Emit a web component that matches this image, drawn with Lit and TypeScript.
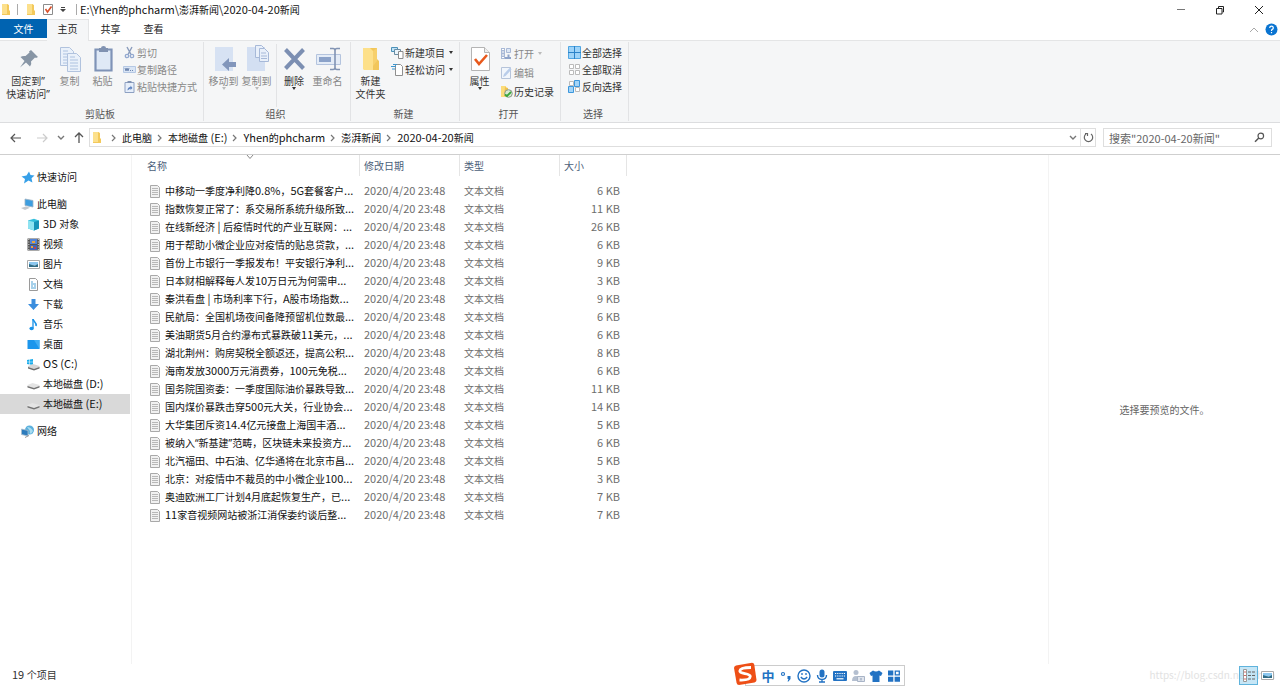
import { LitElement, html, css, TemplateResult } from "lit";
import { customElement, property } from "lit/decorators.js";
import { classMap } from "lit/directives/class-map.js";

const icons: Record<string, TemplateResult> = {
  folder: html`<svg width="10" height="13" viewBox="0 0 10 13"><path d="M1 1h6v11H1z" fill="#fbe29a"/><path d="M6 1l2 1v5l1 1v4H1V11h5z" fill="#f3c95b"/><path d="M1 1h5v10H1z" fill="#fce08c"/></svg>`,
  check: html`<svg width="12" height="13" viewBox="0 0 12 13"><path d="M1.500 1.500h9v10h-9z" fill="#fff" stroke="#8c8c8c"/><path d="M3.500 6l2 3L9.500 3.500" fill="none" stroke="#d9512c" stroke-width="1.600"/></svg>`,
  qat: html`<svg width="6" height="7" viewBox="0 0 6 7"><path d="M1 1h4v1H1zM0 3h6L3 6z" fill="#444"/></svg>`,
  min: html`<svg width="10" height="10" viewBox="0 0 10 10"><path d="M1 4.500h8" stroke="#777" fill="none"/></svg>`,
  restore: html`<svg width="10" height="10" viewBox="0 0 10 10"><path d="M1.500 3.500h5.500v5.500H1.500zM3.500 3V1.500h5v5.500H7.500" stroke="#222" fill="none"/></svg>`,
  close: html`<svg width="10" height="10" viewBox="0 0 10 10"><path d="M1 1l8 8M9 1L1 9" stroke="#222" fill="none"/></svg>`,
  collapse: html`<svg width="10" height="6" viewBox="0 0 10 6"><path d="M1 5l4-4 4 4" stroke="#a8a8a8" fill="none"/></svg>`,
  help: html`<svg width="13" height="13" viewBox="0 0 13 13"><circle cx="6.500" cy="6.500" r="6" fill="#0a74d1"/><path d="M4.700 5Q4.800 3.200 6.500 3.200T8.300 4.900Q8.300 5.800 7.200 6.400 6.500 6.800 6.500 7.900M6.500 9v1.200" fill="none" stroke="#fff" stroke-width="1.200"/></svg>`,
  pin: html`<svg width="32" height="32" viewBox="0 0 32 32"><path d="M19 6l7 7-2 1-1-.5-4 4q1 3-1 5l-4-4-6 5 4.500-6.500-4-4q2-1.500 5-1l4-3.500-.5-1z" fill="#8795a5"/></svg>`,
  copy: html`<svg width="32" height="32" viewBox="0 0 32 32"><g fill="#eaf1fa" stroke="#b1c3de"><path d="M6.500 3.500h9l4 4v14h-13z"/><path d="M13.500 9.500h9l4 4v14h-13z"/></g><path d="M9 7h5M9 10h4M9 13h4M9 16h4M9 19h4M16 13h5M16 16h8M16 19h8M16 22h8M16 25h8" stroke="#adc2e0"/></svg>`,
  paste: html`<svg width="32" height="32" viewBox="0 0 32 32"><path d="M8.500 5.500h16v21h-16z" fill="#dfe9f6" stroke="#7f93b7" stroke-width="2.200"/><path d="M12 4h2q0-2 2.500-2T19 4h2v4h-9z" fill="#8092b1"/></svg>`,
  moveto: html`<svg width="32" height="32" viewBox="0 0 32 32"><path d="M7 3h18v24H7z" fill="#d7e2f3"/><path d="M28 18h-7v-4l-7 6.500 7 6.500v-4h7z" fill="#8296bb"/></svg>`,
  copyto: html`<svg width="32" height="32" viewBox="0 0 32 32"><path d="M6 3h18v24H6z" fill="#d3dff2"/><g fill="#e9f0fa" stroke="#a7b9d8"><path d="M14.500 1.500h6l3 3v9h-9z"/><path d="M18.500 4.500h5l4 4v9h-9z"/></g><path d="M20 9h5M20 12h6M20 14.500h6" stroke="#a7b9d8"/></svg>`,
  del: html`<svg width="32" height="32" viewBox="0 0 32 32"><path d="M7.500 5.500l18 19M25.500 5.500l-18 19" stroke="#7c8fb2" stroke-width="4" fill="none"/></svg>`,
  rename: html`<svg width="32" height="32" viewBox="0 0 32 32"><path d="M4.500 10.500h24v10h-24z" fill="#e4ecf7" stroke="#b4c4de"/><path d="M7 13h12v5H7z" fill="#8ba2c9"/><path d="M18 4.500h3q2 0 2 2v17q0 2-2 2h-3M28 4.500h-3q-2 0-2 2v17q0 2 2 2h3" stroke="#8193b3" stroke-width="1.600" fill="none"/></svg>`,
  newfolder: html`<svg width="32" height="32" viewBox="0 0 32 32"><path d="M8 4h14v11l2 2v9H9z" fill="#f2c65a"/><path d="M8 4h7l3 3v19H9L8 25z" fill="#fde08a"/><path d="M18 7l4-3v13l-4 5z" fill="#f7d06c"/></svg>`,
  props: html`<svg width="32" height="32" viewBox="0 0 32 32"><path d="M7.500 3.500h13l5 5v18h-18z" fill="#fff" stroke="#b4b4b4"/><path d="M20.500 3.500v5h5" fill="#eee" stroke="#b4b4b4"/><path d="M11 15l4 5 8-9" stroke="#e8591c" stroke-width="2.600" fill="none"/></svg>`,
  cut: html`<svg width="13" height="13" viewBox="0 0 13 13"><path d="M4 1l4 7.500M9 1L5 8.500" stroke="#8a9cbc" stroke-width="1.400" fill="none"/><circle cx="4" cy="10" r="1.700" fill="none" stroke="#93a9d0" stroke-width="1.300"/><circle cx="9" cy="10" r="1.700" fill="none" stroke="#93a9d0" stroke-width="1.300"/></svg>`,
  path: html`<svg width="13" height="13" viewBox="0 0 13 13"><path d="M.5 3.500h12v6H.5z" fill="#d9e5f5" stroke="#b5c8e4"/><path d="M2 5l1 3 1-3 1 3 1-3M7 7.500h1M9 7.500h1" stroke="#6f87b0" fill="none"/></svg>`,
  shortcut: html`<svg width="13" height="13" viewBox="0 0 13 13"><path d="M2 2.500h9v10H2z" fill="#e6eefa" stroke="#8da0c2"/><path d="M4.500 1h4v2h-4z" fill="#8193b3"/><path d="M4.500 10.500q0-3.500 3-3.500V5.500L9.500 8 7.500 10V8.500" fill="#5f83c0"/></svg>`,
  newitem: html`<svg width="13" height="13" viewBox="0 0 13 13"><path d="M.5 1.500h6v4h-6z" fill="#bfe2f7" stroke="#4b91b8"/><path d="M3.500 3.500h6v5h-6z" fill="#eaf4fb" stroke="#6a8da3"/><path d="M7.500 5.500h4.500v7H7.500z" fill="#fff" stroke="#8b8b8b"/></svg>`,
  easy: html`<svg width="13" height="13" viewBox="0 0 13 13"><path d="M4.500 1.500h5l2 2v9h-7z" fill="#fff" stroke="#8f8f8f"/><path d="M0 3.500h5M2 1.500h4M1 6h3" stroke="#3d96cf"/></svg>`,
  open: html`<svg width="13" height="13" viewBox="0 0 13 13"><path d="M1 1h4v11H1z" fill="#a9b9d6"/><path d="M2 2.500h2M2 5h2M2 8h2M2 10.500h2" stroke="#fff"/><path d="M6.500 1.500h4v4h-4z" fill="#dde7f5" stroke="#a9b9d6"/><path d="M5 12h6v-2H9.500V7.500h-2V10H5z" fill="#8fa4ca"/></svg>`,
  edit: html`<svg width="13" height="13" viewBox="0 0 13 13"><path d="M1.500 1.500h9v11h-9z" fill="#f1f6fc" stroke="#b6c4da"/><path d="M3 11l1-3 6-6.500 1.500 2L5.500 10z" fill="#b9cdea"/></svg>`,
  history: html`<svg width="13" height="13" viewBox="0 0 13 13"><path d="M1 1h5v11H1z" fill="#fbdc7b"/><path d="M5 2l3 1v8H4z" fill="#f0c34f"/><circle cx="8.500" cy="8.500" r="3.800" fill="#d8ead2" stroke="#8a9a8a"/><path d="M5 9.500l2 1.500 4-4" stroke="#38a63a" stroke-width="1.800" fill="none"/></svg>`,
  selall: html`<svg width="13" height="13" viewBox="0 0 13 13"><path d="M.5.5h12v12H.5z" fill="#9ed3f8" stroke="#4fa5e2"/><path d="M6.500 0v13M0 6.500h13" stroke="#2c83c9"/></svg>`,
  selnone: html`<svg width="13" height="13" viewBox="0 0 13 13"><path d="M1.500 1.500h4v4h-4zM7.500 1.500h4v4h-4zM1.500 7.500h4v4h-4zM7.500 7.500h4v4h-4z" fill="#fff" stroke="#bbb"/></svg>`,
  selinv: html`<svg width="13" height="13" viewBox="0 0 13 13"><path d="M1.500 1.500h4v4h-4zM7.500 7.500h4v4h-4z" fill="#fff" stroke="#bbb"/><path d="M6.500.5h5v6h-5zM.5 6.500h5v6h-5z" fill="#a3d4f8" stroke="#3c97dc"/></svg>`,
  back: html`<svg width="12" height="10" viewBox="0 0 12 10"><path d="M5 1L1 5l4 4M1 5h10" stroke="#555" stroke-width="1.200" fill="none"/></svg>`,
  fwd: html`<svg width="12" height="10" viewBox="0 0 12 10"><path d="M7 1l4 4-4 4M11 5H1" stroke="#ccc" stroke-width="1.200" fill="none"/></svg>`,
  down: html`<svg width="8" height="6" viewBox="0 0 8 6"><path d="M1 1l3 3 3-3" stroke="#777" stroke-width="1.400" fill="none"/></svg>`,
  up: html`<svg width="10" height="12" viewBox="0 0 10 12"><path d="M1 5l4-4 4 4M5 1v10" stroke="#555" stroke-width="1.300" fill="none"/></svg>`,
  sep: html`<svg width="6" height="8" viewBox="0 0 6 8"><path d="M1 1l3 3-3 3" stroke="#777" stroke-width="1.200" fill="none"/></svg>`,
  refresh: html`<svg width="11" height="11" viewBox="0 0 11 11"><path d="M3 2a4.200 4.200 0 1 0 5 0M2 1.500h2.500V4" stroke="#666" stroke-width="1.200" fill="none"/></svg>`,
  search: html`<svg width="11" height="11" viewBox="0 0 11 11"><circle cx="6.800" cy="4" r="2.800" stroke="#555" stroke-width="1.200" fill="none"/><path d="M4.800 6L1 9.800" stroke="#555" stroke-width="1.500"/></svg>`,
  sort: html`<svg width="8" height="5" viewBox="0 0 8 5"><path d="M1 0l3 3.500L7 0" stroke="#888" fill="none"/></svg>`,
  txt: html`<svg width="10" height="13" viewBox="0 0 10 13"><path d="M.5.5h7l2 2v10h-9z" fill="#f1f1f1" stroke="#a9a9a9"/><path d="M2 3.500h6M2 5.500h6M2 7.500h6M2 9.500h6" stroke="#b8b8b8"/></svg>`,
  star: html`<svg width="14" height="13" viewBox="0 0 14 13"><path d="M8 .5l1.500 3.500 4 .5-3 2.700.9 4.300L7.500 9.500 3 12.500l1-4.500L.5 5.500 5.500 4.500z" fill="#37a0e8"/></svg>`,
  pc: html`<svg width="14" height="13" viewBox="0 0 14 13"><path d="M4 1l8 1.500v6.500L4 7.500z" fill="#3d9ee0" stroke="#9db3c4" stroke-width=".8"/><path d="M0 10l5-1.500 4 1.200L4 12z" fill="#c4c9ce"/></svg>`,
  cube: html`<svg width="13" height="13" viewBox="0 0 13 13"><path d="M1 2.500L7 .8l5 1.700v8L7 12.500l-6-2z" fill="#35bfdc"/><path d="M1 2.500l6 1.500v8.500l-6-2z" fill="#8fe3f1"/><path d="M7 4l5-1.500v8l-5 2z" fill="#1793b8"/></svg>`,
  video: html`<svg width="13" height="13" viewBox="0 0 13 13"><path d="M.5.5h12v12H.5z" fill="#555"/><path d="M3 1h7v5H3z" fill="#5384d6"/><path d="M3 7h7v5H3z" fill="#3f63b5"/><path d="M5 3h3v2H5zM4 8h2v2H4z" fill="#e9a53b"/><path d="M7 9h2v2H7z" fill="#c23f4f"/><path d="M1.800 1v12M11.300 1v12" stroke="#ddd" stroke-dasharray="1 1.500"/></svg>`,
  picture: html`<svg width="13" height="13" viewBox="0 0 13 13"><path d="M.5 2.500h12v8H.5z" fill="#fff" stroke="#aaa"/><path d="M2 4h9v3H2z" fill="#8cc7ef"/><path d="M2 9V6l3 1 3 .5L11 6v3z" fill="#2f6b85"/></svg>`,
  doc: html`<svg width="13" height="13" viewBox="0 0 13 13"><path d="M2.500 .5h6l2 2v10h-8z" fill="#fff" stroke="#9a9a9a"/><path d="M4 4h2M4 6h5M4 8h2M7 8h2M4 10h5" stroke="#4fa3d6"/></svg>`,
  download: html`<svg width="13" height="13" viewBox="0 0 13 13"><path d="M4.500 1h4v5H12l-5.500 6L1 6h3.500z" fill="#3b8ede"/></svg>`,
  music: html`<svg width="13" height="13" viewBox="0 0 13 13"><path d="M6 1c0 2.500 4 3 3 7" stroke="#1b93e8" stroke-width="1.600" fill="none"/><path d="M6 1v9" stroke="#1b93e8" stroke-width="1.300"/><ellipse cx="4.600" cy="10.500" rx="2.200" ry="1.800" fill="#1b93e8"/></svg>`,
  desktop: html`<svg width="13" height="13" viewBox="0 0 13 13"><path d="M.5 2h12v9H.5z" fill="#1c96ec"/><path d="M7 2h5.500v9z" fill="#41adf3"/></svg>`,
  osdrive: html`<svg width="13" height="13" viewBox="0 0 13 13"><path d="M0 2l2.500-.5v2.200H0zM3 1.400L6 1v2.700H3zM0 4.200h2.500v2.200L0 6zM3 4.200h3V7l-3-.5z" fill="#1aaceb"/><path d="M1 8l5-2 6.500 2v2L7 12 1 10z" fill="#d5d5d5"/><path d="M1 9l6 2 5.500-2v1.500L7 12.500l-6-2z" fill="#6d6d6d"/></svg>`,
  drive: html`<svg width="13" height="13" viewBox="0 0 13 13"><path d="M.5 7l5-2 7 2v2L7 11 .5 9z" fill="#e4e4e4"/><path d="M.5 8L7 10l5.500-2v1.500L7 11.500.5 9.500z" fill="#737373"/></svg>`,
  network: html`<svg width="14" height="13" viewBox="0 0 14 13"><circle cx="8.500" cy="5" r="4.500" fill="#5bb0dd"/><path d="M6 2q4 0 6 4l-2 3q-2-1-1-3z" fill="#a8dcf1"/><path d="M.5 4l6.500 1.500v5.500L.5 9.500z" fill="#2d7cbd" stroke="#a9bccb" stroke-width=".8"/><path d="M4 12.500l4-2" stroke="#999"/></svg>`,
  details: html`<svg width="13" height="13" viewBox="0 0 13 13"><path d="M1.500 .5h3v12h-3z" fill="#fff" stroke="#999"/><path d="M2 3h2M2 6.500h2M2 10h2" stroke="#d06a6a"/><path d="M6 3h3M10 3h3M6 6.500h3M10 6.500h3M6 10h3M10 10h3" stroke="#666"/></svg>`,
  sogou: html`<svg width="24" height="24" viewBox="0 0 24 24"><path d="M3 3.500L19 .8q2 0 2.300 2L23.500 18q0 2-2 2.400L6 23q-2 0-2.400-2L1 6q0-2 2-2.500z" fill="#ee4f16"/><path d="M18 5.500Q7 5.500 6.800 9c0 3.500 10.500 1.500 10.500 5.500Q17 18.500 6.500 18" stroke="#fff" stroke-width="2.800" fill="none"/></svg>`,
  punct: html`<svg width="14" height="14" viewBox="0 0 14 14"><circle cx="4" cy="5" r="1.500" fill="none" stroke="#2272c3" stroke-width="1.200"/><path d="M8.500 7h3v3l-2 2.500H8.500l1-2.500h-1z" fill="#2272c3"/></svg>`,
  smile: html`<svg width="14" height="14" viewBox="0 0 14 14"><circle cx="7" cy="7" r="6" fill="none" stroke="#2272c3" stroke-width="1.400"/><path d="M5 4v2M9 4v2M3.800 8q3.200 4 6.400 0" stroke="#2272c3" stroke-width="1.300" fill="none"/></svg>`,
  mic: html`<svg width="14" height="14" viewBox="0 0 14 14"><rect x="4.500" y=".5" width="5" height="8" rx="2.500" fill="#2272c3"/><path d="M2.500 6q0 4.500 4.500 4.500T11.500 6M7 10v3M4 13h6" stroke="#2272c3" stroke-width="1.400" fill="none"/></svg>`,
  kbd: html`<svg width="14" height="14" viewBox="0 0 14 14"><rect x="0" y="2" width="14" height="10" rx="1" fill="#2272c3"/><path d="M2 4.500h10M2 7h10" stroke="#fff" stroke-width="1.200" stroke-dasharray="1.200 1"/><path d="M3.500 9.800h7" stroke="#fff" stroke-width="1.200"/></svg>`,
  person: html`<svg width="14" height="14" viewBox="0 0 14 14"><circle cx="5" cy="3.500" r="2.500" fill="#b4bfd0"/><path d="M1 12q0-5 4-5t4 5z" fill="#b4bfd0"/><path d="M6.500 7.500h7v5h-7z" fill="#dfe4ec" stroke="#a8b4c7"/><path d="M10 9v2.500" stroke="#8b9ab3"/></svg>`,
  shirt: html`<svg width="14" height="14" viewBox="0 0 14 14"><path d="M4 1.500q3 2 6 0L13.500 4 12 7l-1.500-.5V13h-7V6.500L2 7 .5 4z" fill="#2272c3"/></svg>`,
  grid: html`<svg width="14" height="14" viewBox="0 0 14 14"><path d="M1 1.500h5.300v5H1zM1 7.800h5.300v5H1zM7.600 7.800H13v5H7.600z" fill="#2272c3"/><path d="M8.300 2.200h4v3.600h-4z" fill="#fff" stroke="#2272c3" stroke-width="1.300"/></svg>`,
};

/* Latin runs are one pixel larger than the ideographs; curly quotes use a narrow face. */
const mixed = (text: string) =>
  text
    .split(/([\x20-\x7e]+|[“”])/)
    .filter(Boolean)
    .map((run) =>
      /^[“”]/.test(run)
        ? html`<span class="quote">${run}</span>`
        : /^[\x20-\x7e]/.test(run)
          ? html`<span class="latin">${run}</span>`
          : run
    );

const base = css`
  * { box-sizing: border-box; }
  svg { display: block; flex: none; }
  button, input {
    font: inherit; color: inherit; background: none; border: 0; padding: 0; margin: 0; border-radius: 0;
  }
  a { color: inherit; text-decoration: none; }
  ul, ol { list-style: none; margin: 0; padding: 0; }
  .latin { font-size: 11px; line-height: 1; white-space: pre; }
  .quote { font-family: "Noto Sans", sans-serif; line-height: 1; }
`;

type Small = { icon: string; label: string; off?: boolean; menu?: boolean };
type Big = { icon: string; lines: string[]; off?: boolean; menu?: boolean; wide?: boolean; split?: boolean };
type Group = { name: string; big: Big[]; small: Small[] };

const groups: Group[] = [
  {
    name: "剪贴板",
    big: [
      { icon: "pin", lines: ["固定到”", "快速访问”"], wide: true },
      { icon: "copy", lines: ["复制"], off: true },
      { icon: "paste", lines: ["粘贴"], off: true },
    ],
    small: [
      { icon: "cut", label: "剪切", off: true },
      { icon: "path", label: "复制路径", off: true },
      { icon: "shortcut", label: "粘贴快捷方式", off: true },
    ],
  },
  {
    name: "组织",
    big: [
      { icon: "moveto", lines: ["移动到"], off: true, menu: true },
      { icon: "copyto", lines: ["复制到"], off: true, menu: true },
      { icon: "del", lines: ["删除"], menu: true, split: true },
      { icon: "rename", lines: ["重命名"], off: true },
    ],
    small: [],
  },
  {
    name: "新建",
    big: [{ icon: "newfolder", lines: ["新建", "文件夹"] }],
    small: [
      { icon: "newitem", label: "新建项目", menu: true },
      { icon: "easy", label: "轻松访问", menu: true },
    ],
  },
  {
    name: "打开",
    big: [{ icon: "props", lines: ["属性"], menu: true }],
    small: [
      { icon: "open", label: "打开", off: true, menu: true },
      { icon: "edit", label: "编辑", off: true },
      { icon: "history", label: "历史记录" },
    ],
  },
  {
    name: "选择",
    big: [],
    small: [
      { icon: "selall", label: "全部选择" },
      { icon: "selnone", label: "全部取消" },
      { icon: "selinv", label: "反向选择" },
    ],
  },
];

@customElement("explorer-ribbon")
export class ExplorerRibbon extends LitElement {
  static styles = [
    base,
    css`
      :host { display: flex; flex: none; height: 83px; background: #f5f6f7; border-top: 1px solid #e4e5e6; border-bottom: 1px solid #dcdddf; color: #333; }
      .group { display: flex; flex-direction: column; border-right: 1px solid #e2e3e5; padding: 2px 6px 0 3px; margin: 1px 0; }
      .tools { display: flex; flex: 1; }
      .name { text-align: center; line-height: 14px; color: #555; }
      .big { display: flex; flex-direction: column; align-items: center; width: 33px; line-height: 13px; white-space: nowrap; }
      .big svg { margin-bottom: -2px; }
      .big.wide { width: 50px; }
      .big .label { display: block; }
      .big.split { width: 35px; border-left: 1px solid #e2e3e5; margin-left: 3px; }
      .off { color: #888; }
      .arrow { border: 2px solid transparent; border-top: 3px solid currentColor; border-bottom: 0; }
      .off .arrow { border-top-color: #bbb; }
      .list { display: flex; flex-direction: column; padding-left: 4px; }
      .list.spread { gap: 2px; padding-top: 1px; }
      .small { display: flex; align-items: center; gap: 1px; height: 17px; white-space: nowrap; line-height: 17px; }
      .small .arrow { margin-left: 3px; }
    `,
  ];

  render() {
    return groups.map(
      (g) => html`<section class="group" aria-label=${g.name}>
        <div class="tools">
          ${g.big.map(
            (b) => html`<button class=${classMap({ big: true, off: !!b.off, wide: !!b.wide, split: !!b.split })} ?disabled=${b.off}>
              ${icons[b.icon]}${b.lines.map((l) => html`<span class="label">${mixed(l)}</span>`)}
              ${b.menu ? html`<span class="arrow"></span>` : ""}
            </button>`
          )}
          ${g.small.length
            ? html`<div class=${classMap({ list: true, spread: g.name === "打开" })}>
                ${g.small.map(
                  (s) => html`<button class=${classMap({ small: true, off: !!s.off })} ?disabled=${s.off}>
                    ${icons[s.icon]}<span>${s.label}</span>${s.menu ? html`<span class="arrow"></span>` : ""}
                  </button>`
                )}
              </div>`
            : ""}
        </div>
        <div class="name">${g.name}</div>
      </section>`
    );
  }
}

const places = [
  { icon: "star", label: "快速访问", root: true },
  { icon: "pc", label: "此电脑", root: true },
  { icon: "cube", label: "3D 对象" },
  { icon: "video", label: "视频" },
  { icon: "picture", label: "图片" },
  { icon: "doc", label: "文档" },
  { icon: "download", label: "下载" },
  { icon: "music", label: "音乐" },
  { icon: "desktop", label: "桌面" },
  { icon: "osdrive", label: "OS (C:)" },
  { icon: "drive", label: "本地磁盘 (D:)" },
  { icon: "drive", label: "本地磁盘 (E:)", current: true },
  { icon: "network", label: "网络", root: true },
];

@customElement("explorer-places")
export class ExplorerPlaces extends LitElement {
  static styles = [
    base,
    css`
      :host { display: block; flex: none; width: 132px; padding: 5px 1px 0 0; border-right: 1px solid #f3f3f3; }
      .place { display: flex; align-items: center; gap: 3px; height: 20px; padding-left: 27px; white-space: nowrap; color: #111; }
      .root .place { padding-left: 21px; gap: 2px; }
      .root { padding-top: 7px; }
      .current { background: #d9d9d9; }
    `,
  ];

  render() {
    return html`<nav aria-label="导航"><ul>
      ${places.map(
        (p) => html`<li class=${classMap({ root: !!p.root })}>
          <a href="#" class=${classMap({ place: true, current: !!p.current })}>${icons[p.icon]}<span>${mixed(p.label)}</span></a>
        </li>`
      )}
    </ul></nav>`;
  }
}

const files: [string, string][] = [
  ["中移动一季度净利降0.8%，5G套餐客户...", "6 KB"],
  ["指数恢复正常了：系交易所系统升级所致...", "11 KB"],
  ["在线新经济 | 后疫情时代的产业互联网：...", "26 KB"],
  ["用于帮助小微企业应对疫情的贴息贷款，...", "6 KB"],
  ["首份上市银行一季报发布！平安银行净利...", "9 KB"],
  ["日本财相解释每人发10万日元为何需申...", "3 KB"],
  ["秦洪看盘 | 市场利率下行，A股市场指数...", "9 KB"],
  ["民航局：全国机场夜间备降预留机位数最...", "6 KB"],
  ["美油期货5月合约瀑布式暴跌破11美元，...", "6 KB"],
  ["湖北荆州：购房契税全额返还，提高公积...", "8 KB"],
  ["海南发放3000万元消费券，100元免税...", "6 KB"],
  ["国务院国资委：一季度国际油价暴跌导致...", "11 KB"],
  ["国内煤价暴跌击穿500元大关，行业协会...", "14 KB"],
  ["大华集团斥资14.4亿元接盘上海国丰酒...", "5 KB"],
  ["被纳入“新基建”范畴，区块链未来投资方...", "6 KB"],
  ["北汽福田、中石油、亿华通将在北京市昌...", "5 KB"],
  ["北京：对疫情中不裁员的中小微企业100...", "3 KB"],
  ["奥迪欧洲工厂计划4月底起恢复生产，已...", "7 KB"],
  ["11家音视频网站被浙江消保委约谈后整...", "7 KB"],
];

@customElement("explorer-files")
export class ExplorerFiles extends LitElement {
  static styles = [
    base,
    css`
      :host { display: block; flex: 1; min-width: 0; }
      table { border-collapse: collapse; table-layout: fixed; width: 495px; }
      .c-name { width: 228px; }
      .c-mid { width: 100px; }
      .c-size { width: 67px; }
      th { padding: 0 0 6px; font-weight: 400; text-align: left; color: #4c607a; position: relative; }
      .head { display: block; width: 100%; height: 21px; line-height: 21px; padding-left: 4px; text-align: left; border-right: 1px solid #e5e5e5; }
      .c-first .head { padding-left: 15px; }
      .sort { position: absolute; top: 0; left: 50%; }
      td { height: 18px; line-height: 16px; padding: 0 0 0 4px; color: #6d6d6d; white-space: nowrap; }
      .file { display: flex; align-items: center; gap: 5px; padding-left: 14px; color: #111; }
      .size { text-align: right; padding-right: 7px; }
    `,
  ];

  render() {
    return html`<table>
      <colgroup><col class="c-name" /><col class="c-mid" /><col class="c-mid" /><col class="c-size" /></colgroup>
      <thead><tr>
        <th class="c-first"><button class="head">名称</button><span class="sort">${icons.sort}</span></th>
        <th><button class="head">修改日期</button></th>
        <th><button class="head">类型</button></th>
        <th><button class="head">大小</button></th>
      </tr></thead>
      <tbody>
        ${files.map(
          ([name, size]) => html`<tr>
            <td><div class="file">${icons.txt}<span>${mixed(name)}</span></div></td>
            <td>${mixed("2020/4/20 23:48")}</td>
            <td>文本文档</td>
            <td class="size">${mixed(size)}</td>
          </tr>`
        )}
      </tbody>
    </table>`;
  }
}

@customElement("ime-bar")
export class ImeBar extends LitElement {
  static styles = [
    base,
    css`
      :host { position: absolute; right: 375px; bottom: 0; display: flex; align-items: flex-end; }
      .logo { position: relative; margin-right: -12px; }
      .bar { display: flex; align-items: center; height: 21px; padding: 0 1px 0 13px; background: #fff; border: 1px solid #ccc; }
      .key { display: flex; align-items: center; justify-content: center; width: 18px; height: 18px; color: #2272c3; font-size: 13px; font-weight: 700; line-height: 18px; }
    `,
  ];

  render() {
    return html`<span class="logo">${icons.sogou}</span>
      <div class="bar">
        <button class="key">中</button>
        ${["punct", "smile", "mic", "kbd", "person", "shirt", "grid"].map(
          (k) => html`<button class="key" aria-label=${k}>${icons[k]}</button>`
        )}
      </div>`;
  }
}

@customElement("app-root")
export class AppRoot extends LitElement {
  @property({ type: Array }) crumbs = ["此电脑", "本地磁盘 (E:)", "Yhen的phcharm", "澎湃新闻", "2020-04-20新闻"];

  static styles = [
    base,
    css`
      :host {
        display: flex; flex-direction: column; position: relative; min-height: 100vh; background: #fff;
        font-family: "Noto Sans CJK SC", sans-serif; font-size: 10px; line-height: 16px; color: #222; overflow: hidden;
      }
      .title { display: flex; align-items: center; height: 19px; flex: none; padding: 0 2px 0 1px; }
      .title .bar { width: 1px; height: 11px; background: #aaa; }
      .quick { display: flex; align-items: center; gap: 6px; }
      .quick .bar { margin: 0 2px 0 0; }
      .quick .last { margin: 0 0 0 4px; }
      .caption { margin: 0 auto 0 3px; font-size: 10px; font-weight: 400; line-height: 18px; color: #111; }
      .win { width: 39px; height: 18px; display: flex; align-items: center; justify-content: center; }
      .tabs { display: flex; height: 21px; flex: none; padding-right: 2px; }
      .tab { width: 43px; line-height: 20px; height: 20px; text-align: center; }
      .tab.file { width: 47px; height: 19px; background: #0063b1; color: #fff; }
      .tab.on { width: 42px; height: 22px; background: #f5f6f7; border: 1px solid #e4e5e6; border-width: 1px 1px 0 0; position: relative; line-height: 18px; padding-bottom: 3px; }
      .corner { display: flex; align-items: center; gap: 6px; margin-left: auto; }
      .address { display: flex; align-items: center; height: 31px; flex: none; padding: 0 8px 2px 10px; }
      .address .nav { display: flex; align-items: center; gap: 14px; width: 79px; }
      .address .nav .near { margin: 0 -5px; }
      .box { display: flex; align-items: center; height: 19px; border: 1px solid #dedede; }
      .trail { flex: 1; min-width: 0; padding-left: 2px; }
      .crumbs { display: flex; align-items: center; flex: 1; margin-left: 4px; white-space: nowrap; color: #111; }
      .crumbs li { display: flex; align-items: center; }
      .crumbs svg { margin: 0 5px; }
      .crumbs li a { display: block; line-height: 16px; }
      .drop { width: 11px; }
      .refresh { width: 15px; height: 17px; display: flex; align-items: center; justify-content: center; border-left: 1px solid #e2e2e2; }
      .find { width: 169px; margin-left: 7px; padding: 0 6px 0 5px; color: #555; }
      .find input { flex: 1; min-width: 0; outline: none; height: 17px; font-size: 11px; }
      .find input::placeholder { color: #666; opacity: 1; }
      .body { display: flex; flex: 1; border-top: 1px solid #cfcfcf; }
      .preview { width: 232px; flex: none; border-left: 1px solid #f3f3f3; display: flex; align-items: center; justify-content: center; color: #666; }
      .status { display: flex; align-items: center; height: 22px; flex: none; padding: 0 3px 0 12px; color: #333; }
      .mark { margin-left: auto; margin-right: -36px; color: #e2e2e2; }
      .view { width: 19px; height: 19px; display: flex; align-items: center; justify-content: center; }
      .view.on { background: rgba(160, 214, 240, 0.6); border: 1px solid #5fb3dc; }
    `,
  ];

  render() {
    return html`
      <header class="title">
        <div class="quick">
          ${icons.folder}<span class="bar"></span>${icons.folder}
          <button aria-label="属性">${icons.check}</button>
          <button aria-label="自定义快速访问工具栏">${icons.qat}</button>
          <span class="bar last"></span>
        </div>
        <h1 class="caption">${mixed("E:\\Yhen的phcharm\\澎湃新闻\\2020-04-20新闻")}</h1>
        <button class="win" aria-label="最小化">${icons.min}</button>
        <button class="win" aria-label="还原">${icons.restore}</button>
        <button class="win" aria-label="关闭">${icons.close}</button>
      </header>
      <div class="tabs">
        <button class="tab file">文件</button>
        <button class="tab on">主页</button>
        <button class="tab">共享</button>
        <button class="tab">查看</button>
        <span class="corner">
          <button aria-label="折叠功能区">${icons.collapse}</button>
          <button aria-label="帮助">${icons.help}</button>
        </span>
      </div>
      <explorer-ribbon></explorer-ribbon>
      <div class="address">
        <div class="nav">
          <button aria-label="后退">${icons.back}</button>
          <button aria-label="前进">${icons.fwd}</button>
          <button class="near" aria-label="最近">${icons.down}</button>
          <button aria-label="上移">${icons.up}</button>
        </div>
        <div class="box trail">
          ${icons.folder}
          <ol class="crumbs">
            ${this.crumbs.map((c) => html`<li>${icons.sep}<a href="#">${mixed(c)}</a></li>`)}
          </ol>
          <button class="drop" aria-label="历史">${icons.down}</button>
          <button class="refresh" aria-label="刷新">${icons.refresh}</button>
        </div>
        <div class="box find">
          <input type="search" aria-label="搜索" placeholder='搜索"2020-04-20新闻"' />
          ${icons.search}
        </div>
      </div>
      <main class="body">
        <explorer-places></explorer-places>
        <explorer-files></explorer-files>
        <aside class="preview">选择要预览的文件。</aside>
      </main>
      <footer class="status">
        <span>${mixed("19 个项目")}</span>
        <span class="mark">https://blog.csdn.net/Yhen</span>
        <button class="view on" aria-label="详细信息">${icons.details}</button>
        <button class="view" aria-label="大图标">${icons.picture}</button>
      </footer>
      <ime-bar></ime-bar>
    `;
  }
}
